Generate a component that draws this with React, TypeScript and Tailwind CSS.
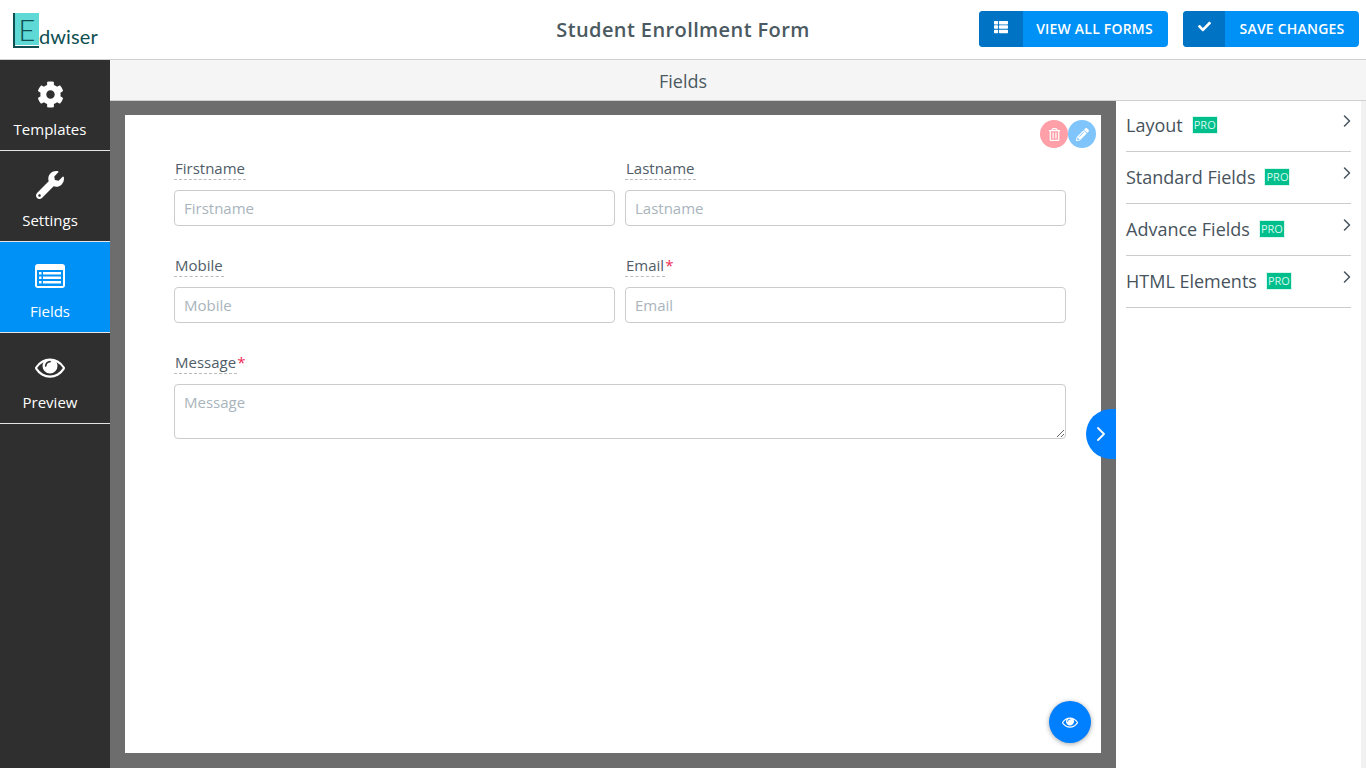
import { FaCheck, FaCog, FaPencilAlt, FaRegTrashAlt, FaThList, FaWrench } from "react-icons/fa";
import { ChevronRight } from "lucide-react";

function EyeIcon({ size }: { size: number }) {
  return (
    <svg width={size} height={size} viewBox="0 0 1792 1792" fill="currentColor">
      <path d="M1664 960q-152-236-381-353 61 104 61 225 0 185-131.500 316.500t-316.500 131.500-316.500-131.500-131.500-316.500q0-121 61-225-229 117-381 353 133 205 333.500 326.500t434.500 121.500 434.500-121.500 333.500-326.500zm-720-384q0-20-14-34t-34-14q-125 0-214.500 89.500t-89.500 214.500q0 20 14 34t34 14 34-14 14-34q0-86 61-147t147-61q20 0 34-14t14-34zm848 384q0 34-20 69-140 230-376.500 368.500t-499.500 138.500-499.500-139-376.500-368q-20-35-20-69t20-69q140-229 376.500-368t499.500-139 499.500 139 376.500 368q20 35 20 69z" />
    </svg>
  );
}

function FormIcon() {
  return (
    <svg width="30" height="24" viewBox="0 0 30 24">
      <rect x="0" y="0" width="30" height="24" rx="3" fill="#fff" />
      <rect x="2" y="6" width="26" height="16" fill="#0091f7" />
      <g fill="#fff">
        <rect x="4" y="8" width="2.5" height="2.5" />
        <rect x="4" y="12.5" width="2.5" height="2.5" />
        <rect x="4" y="17" width="2.5" height="2.5" />
        <rect x="8" y="8" width="18" height="2.5" />
        <rect x="8" y="12.5" width="18" height="2.5" />
        <rect x="8" y="17" width="18" height="2.5" />
      </g>
    </svg>
  );
}

const NAV = [
  { label: "Templates", icon: <FaCog className="text-[27px]" /> },
  { label: "Settings", icon: <FaWrench className="text-[28px]" /> },
  { label: "Fields", icon: <FormIcon />, active: true },
  { label: "Preview", icon: <EyeIcon size={30} /> },
];

const GROUPS = ["Layout", "Standard Fields", "Advance Fields", "HTML Elements"];

function Logo() {
  return (
    <div className="flex h-full items-start pl-[13px] pt-[13px]">
      <div className="relative h-[35px] w-[26px] border-b-2 border-l-2 border-[#0f4f52]">
        <div className="absolute bottom-[1px] left-0 right-0 top-0 flex items-center justify-center bg-[#5fd9d5] text-[29px] font-light leading-none text-[#0f4f52] [font-family:Lato,sans-serif]">
          E
        </div>
      </div>
      <span className="mt-[11px] text-[20px] leading-[24px] tracking-[0.1px] text-[#0f4f52] [font-family:Lato,sans-serif]">
        dwiser
      </span>
    </div>
  );
}

function HeaderButton({ icon, label, iconW, w, pad }: { icon: React.ReactNode; label: string; iconW: string; w: string; pad: string }) {
  return (
    <button type="button" className={`flex h-[36px] overflow-hidden rounded-[4px] bg-[#0091f7] text-white ${w}`}>
      <span className={`flex h-full items-start justify-center bg-[#0073c5] pt-[9px] text-[14px] ${iconW}`}>{icon}</span>
      <span className={`flex flex-1 items-center justify-center pb-[2px] text-[14px] font-semibold tracking-[0.2px] ${pad}`}>{label}</span>
    </button>
  );
}

function FieldLabel({ label, required }: { label: string; required?: boolean }) {
  return (
    <div className="flex h-[34px] items-start pt-px text-[15px] leading-[22px] text-[#505d68]">
      <span className="border-b border-dashed border-[#bbbbbb] px-px">{label}</span>
      {required && <span className="text-[#ee2a55]">*</span>}
    </div>
  );
}

function Field({ label, required }: { label: string; required?: boolean }) {
  return (
    <div className="w-[441px]">
      <FieldLabel label={label} required={required} />
      <input
        placeholder={label}
        className="block h-[36px] w-full rounded-[4px] border border-[#cccccc] bg-white px-[9px] text-[15px] text-[#505d68] outline-none placeholder:text-[#a9b4bc]"
      />
    </div>
  );
}

export default function App() {
  return (
    <div className="flex h-[768px] w-[1366px] flex-col overflow-hidden bg-white [font-family:'Open_Sans',sans-serif]">
      <header className="relative flex h-[60px] shrink-0 items-start border-b border-[#d0d0d0] bg-white">
        <div className="h-full w-[110px]">
          <Logo />
        </div>
        <h1 className="absolute left-[110px] right-[110px] top-[16px] text-center text-[20px] font-semibold leading-[27px] tracking-[0.4px] text-[#4b5a61]">
          Student Enrollment Form
        </h1>
        <div className="ml-auto flex gap-[15px] pr-[7px] pt-[11px]">
          <HeaderButton icon={<FaThList />} label="VIEW ALL FORMS" iconW="w-[44px]" w="w-[189px]" pad="pr-[2px]" />
          <HeaderButton icon={<FaCheck className="text-[13px]" />} label="SAVE CHANGES" iconW="w-[42px]" w="w-[176px]" pad="" />
        </div>
      </header>

      <div className="flex min-h-0 flex-1">
        <nav className="w-[110px] shrink-0 bg-[#2f2f2f]">
          {NAV.map((n) => (
            <div
              key={n.label}
              className={`flex h-[91px] flex-col items-center border-b border-[#e4e4e4] pr-[10px] text-white ${n.active ? "bg-[#0091f7]" : ""}`}
            >
              <div className="flex h-[59px] items-center justify-center pt-[9px]">{n.icon}</div>
              <span className="text-[15px] leading-[20px]">{n.label}</span>
            </div>
          ))}
        </nav>

        <div className="flex min-w-0 flex-1 flex-col">
          <div className="flex h-[41px] shrink-0 items-center justify-center border-b border-[#d0d0d0] bg-[#f5f5f5] pr-[110px] pt-[3px] text-[18px] text-[#4b5a61]">
            Fields
          </div>
          <div className="flex min-h-0 flex-1">
            <main className="relative w-[1006px] shrink-0 bg-[#6d6d6d] pb-[15px] pl-[15px] pr-[15px] pt-[14px]">
              <div className="relative h-full bg-white pl-[49px] pt-[41px]">
                <div className="absolute right-[5px] top-[5px] flex">
                  <span className="flex h-[28px] w-[28px] items-center justify-center rounded-full bg-[#ff9fa8] text-[13px] text-white">
                    <FaRegTrashAlt />
                  </span>
                  <span className="flex h-[28px] w-[28px] items-center justify-center rounded-full bg-[#7fc4fb] text-[13px] text-white">
                    <FaPencilAlt />
                  </span>
                </div>
                <div className="flex flex-col gap-[27px]">
                  <div className="flex gap-[10px]">
                    <Field label="Firstname" />
                    <Field label="Lastname" />
                  </div>
                  <div className="flex gap-[10px]">
                    <Field label="Mobile" />
                    <Field label="Email" required />
                  </div>
                  <div className="w-[892px]">
                    <FieldLabel label="Message" required />
                    <textarea
                      placeholder="Message"
                      className="block h-[55px] w-full rounded-[4px] border border-[#cccccc] bg-white px-[9px] py-[6px] text-[15px] leading-[22px] text-[#505d68] outline-none placeholder:text-[#a9b4bc]"
                    />
                  </div>
                </div>
                <button
                  type="button"
                  className="absolute bottom-[10px] right-[10px] flex h-[42px] w-[42px] items-center justify-center rounded-full bg-[#007fff] text-white shadow-[0_1px_5px_rgba(0,0,0,0.35)]"
                >
                  <EyeIcon size={16} />
                </button>
              </div>
              <button
                type="button"
                className="absolute right-0 top-[308px] flex h-[50px] w-[30px] items-center justify-center rounded-l-full bg-[#007fff] text-white"
              >
                <ChevronRight size={24} strokeWidth={1.8} />
              </button>
            </main>

            <aside className="flex min-w-0 flex-1">
              <div className="-mt-px flex-1 px-[10px]">
                {GROUPS.map((g) => (
                  <div key={g} className="flex h-[52px] items-start border-b border-[#cccccc] pt-[13px]">
                    <span className="text-[18px] leading-[25px] text-[#47535c]">{g}</span>
                    <span className="ml-[9px] mt-[3px] h-[18px] w-[26px] border border-[#d7f7ed] bg-[#00bf8c] text-center text-[11px] leading-[16px] text-[#d7f7ed]">
                      PRO
                    </span>
                    <ChevronRight size={20} strokeWidth={1.8} className="-mt-[2px] ml-auto mr-[-6px] text-[#47535c]" />
                  </div>
                ))}
              </div>
              <div className="w-[5px] shrink-0 bg-[#f1f1f1]" />
            </aside>
          </div>
        </div>
      </div>
    </div>
  );
}
